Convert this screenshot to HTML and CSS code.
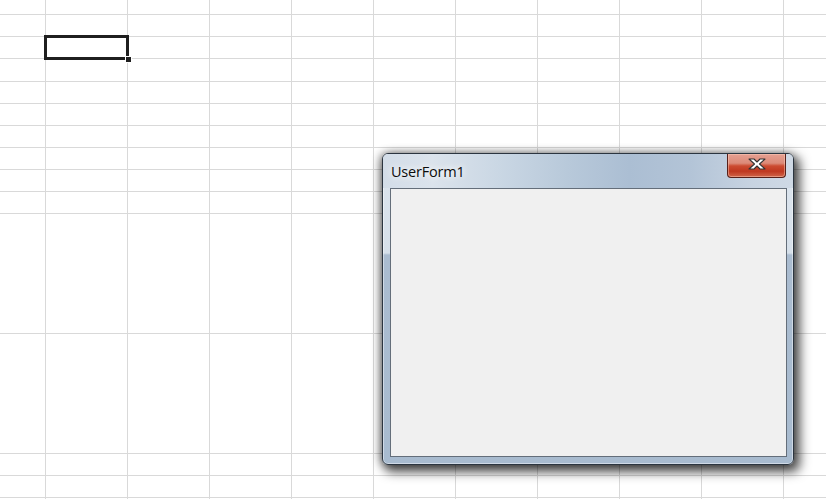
FILE: index.html
```html
<!DOCTYPE html>
<html>
<head>
<meta charset="utf-8">
<link rel="stylesheet" href="styles.css">
</head>
<body>
<div class="sheet">
  <div class="row r15"></div>
  <div class="row r22"></div>
  <div class="row r22"></div>
  <div class="row r23"></div>
  <div class="row r22"></div>
  <div class="row r22"></div>
  <div class="row r22"></div>
  <div class="row r22"></div>
  <div class="row r22"></div>
  <div class="row r22"></div>
  <div class="row r120"></div>
  <div class="row r120"></div>
  <div class="row r22"></div>
  <div class="row r22"></div>
  <div class="row r22"></div>

  <div class="selection"><span class="handle"></span></div>

  <div class="window">
    <div class="titlebar">
      <span class="title">UserForm1</span>
      <div class="close">
        <svg width="18" height="12" viewBox="-1 -1 18 12">
          <polygon points="0,0 5,0 8,3 11,0 16,0 10.5,5 16,10 11,10 8,7 5,10 0,10 5.5,5" fill="#ffffff" stroke="#333333" stroke-width="1.1" stroke-linejoin="round"/>
        </svg>
      </div>
    </div>
    <div class="client"></div>
  </div>
</div>
</body>
</html>
```

FILE: styles.css
```css
html, body {
  margin: 0;
  padding: 0;
  background: #ffffff;
}

.sheet {
  position: relative;
  width: 826px;
  height: 499px;
  overflow: hidden;
  background-color: #ffffff;
  background-image: linear-gradient(to right, #d9d9d9 1px, transparent 1px);
  background-size: 82px 100%;
  background-position: 45px 0;
}

.row {
  box-sizing: border-box;
  border-bottom: 1px solid #d9d9d9;
}
.r15 { height: 15px; }
.r22 { height: 22px; }
.r23 { height: 23px; }
.r120 { height: 120px; }

.selection {
  position: absolute;
  left: 44px;
  top: 35px;
  width: 85px;
  height: 25px;
  box-sizing: border-box;
  border: 3px solid #1f1f1f;
  background: #ffffff;
}
.handle {
  position: absolute;
  right: -6px;
  bottom: -6px;
  width: 5px;
  height: 5px;
  background: #1f1f1f;
  border: 1px solid #ffffff;
}

.window {
  position: absolute;
  left: 382px;
  top: 153px;
  width: 412px;
  height: 312px;
  box-sizing: border-box;
  border: 1px solid #2b3540;
  border-radius: 6px;
  display: flex;
  flex-direction: column;
  padding: 0 6px 7px 7px;
  background: linear-gradient(to bottom, #dde5ee 0px, #d6e0ea 99px, #aabcd0 101px, #a8bbcf 100%);
  box-shadow: inset 0 0 0 1px rgba(255,255,255,0.45), 4px 5px 11px 2px rgba(0,0,0,0.68), -2px 0 8px rgba(0,0,0,0.4);
}

.titlebar {
  height: 34px;
  flex: none;
  display: flex;
  align-items: flex-start;
  margin: 0 -6px 0 -7px;
  padding: 0 6px 0 8px;
  border-radius: 5px 5px 0 0;
  background: linear-gradient(to right, #d3dde8 0%, #dbe3ec 12%, #cad7e4 28%, #b8c9da 45%, #abbed3 60%, #b3c4d7 75%, #c7d3e1 90%, #cfd9e5 100%);
}

.title {
  margin-top: 8px;
  font-family: "Open Sans", "Noto Sans", sans-serif;
  font-size: 14.5px;
  line-height: 19px;
  color: #0c0c0c;
  letter-spacing: -0.2px;
  text-shadow: 0 0 6px #ffffff, 0 0 10px rgba(255,255,255,0.9);
}

.close {
  margin-left: auto;
  margin-right: 1px;
  width: 59px;
  height: 24px;
  box-sizing: border-box;
  border: 1px solid #57201a;
  border-top: none;
  border-radius: 0 0 4px 4px;
  display: flex;
  align-items: center;
  justify-content: center;
  padding-bottom: 3px;
  background: linear-gradient(to bottom, #e5a092 0%, #dc8a78 40%, #cc4b31 52%, #bf3820 75%, #d0654a 100%);
  box-shadow: inset 0 0 0 1px rgba(255,210,190,0.45);
}

.client {
  flex: 1;
  background: #f0f0f0;
  border: 1px solid #646e7a;
}
```
